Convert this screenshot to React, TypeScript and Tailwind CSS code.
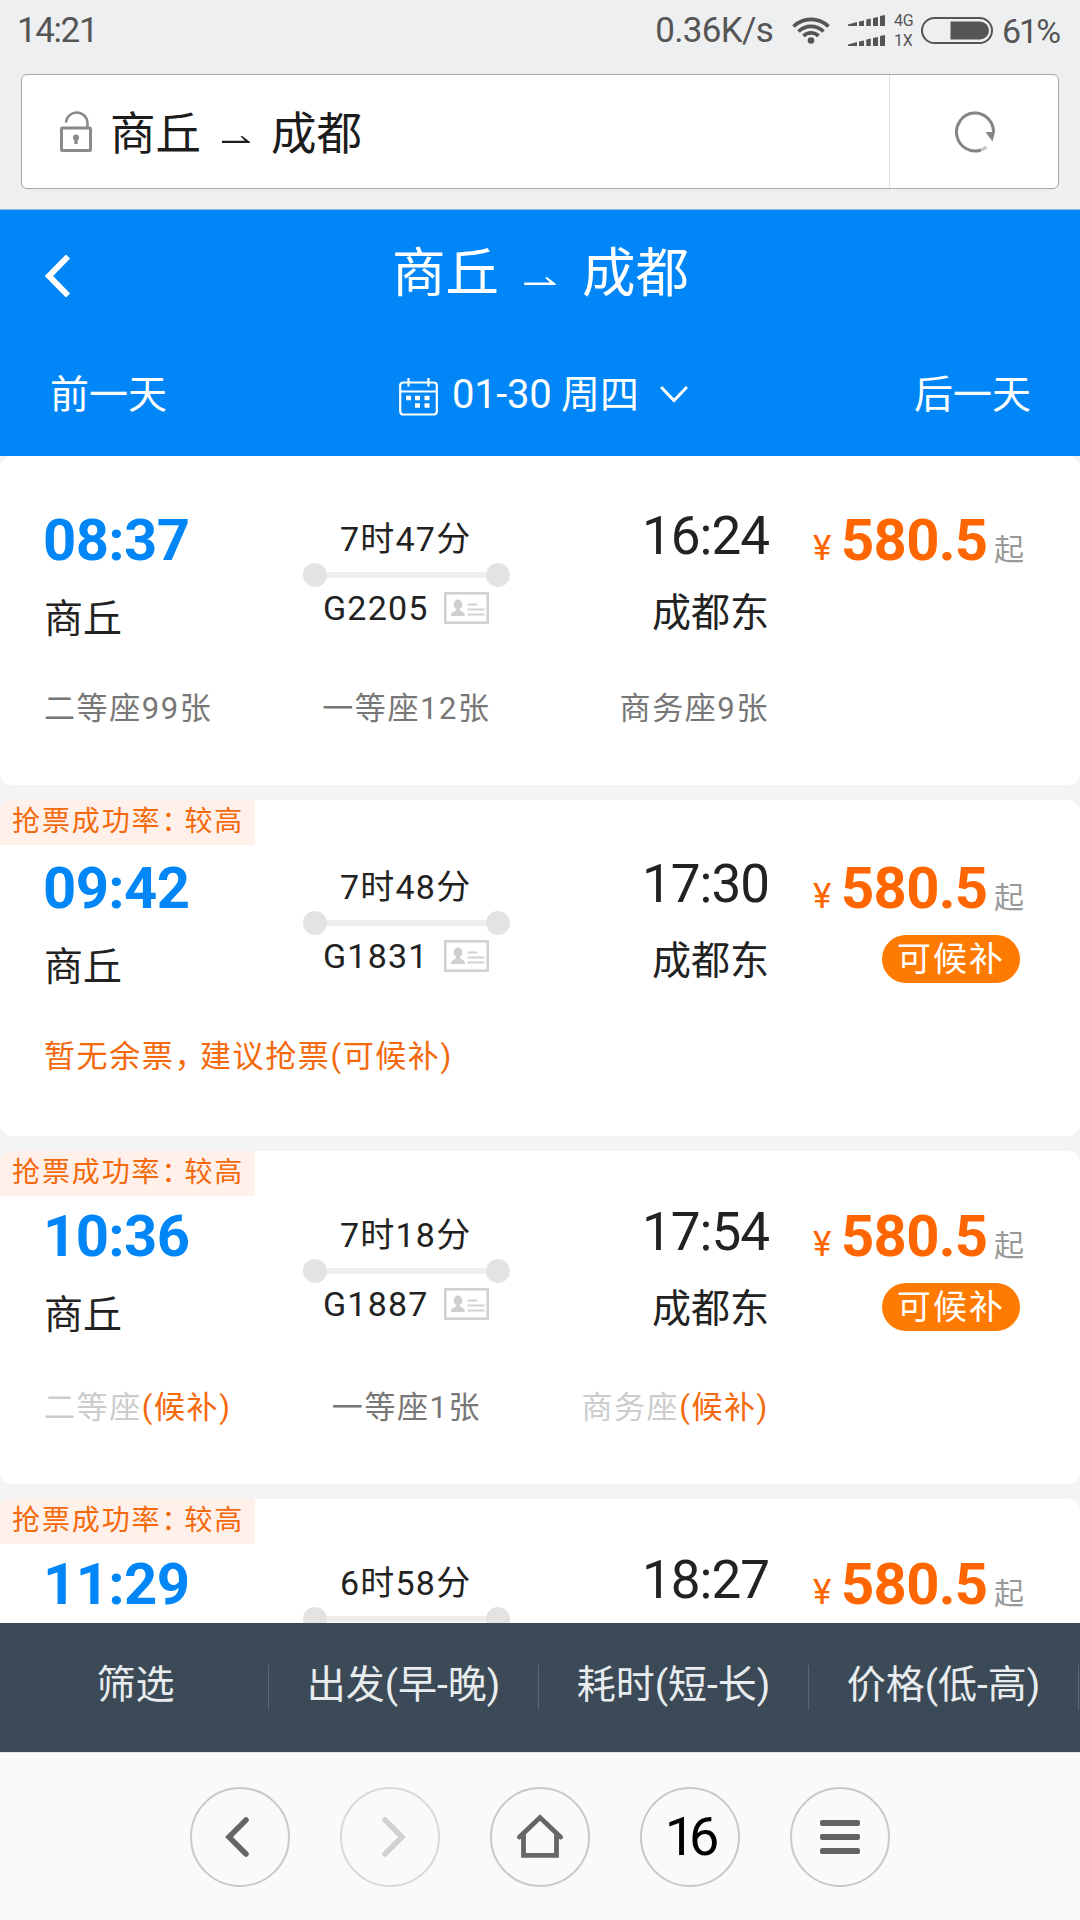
import React from "react";

type Seat = { label: string; waitlist?: boolean };

type Train = {
  depart: string;
  arrive: string;
  from?: string;
  to?: string;
  duration: string;
  code?: string;
  seats?: Seat[];
  notice?: boolean;
  tag?: boolean;
  pill?: boolean;
  frame: string;
  seatRow?: string;
};

const trains: Train[] = [
  {
    depart: "08:37",
    arrive: "16:24",
    from: "商丘",
    to: "成都东",
    duration: "7时47分",
    code: "G2205",
    seats: [{ label: "二等座99张" }, { label: "一等座12张" }, { label: "商务座9张" }],
    frame: "h-[329px] pt-[44px]",
    seatRow: "pt-[24px]",
  },
  {
    depart: "09:42",
    arrive: "17:30",
    from: "商丘",
    to: "成都东",
    duration: "7时48分",
    code: "G1831",
    notice: true,
    tag: true,
    pill: true,
    frame: "h-[336px] pt-[48px]",
    seatRow: "pt-[24px]",
  },
  {
    depart: "10:36",
    arrive: "17:54",
    from: "商丘",
    to: "成都东",
    duration: "7时18分",
    code: "G1887",
    seats: [
      { label: "二等座", waitlist: true },
      { label: "一等座1张" },
      { label: "商务座", waitlist: true },
    ],
    tag: true,
    pill: true,
    frame: "h-[333px] pt-[45px]",
    seatRow: "pt-[27px]",
  },
  {
    depart: "11:29",
    arrive: "18:27",
    duration: "6时58分",
    tag: true,
    frame: "h-[333px] pt-[45px]",
  },
];

function HalfArrow({ className }: { className: string }) {
  return (
    <svg viewBox="0 0 28 8" className={className} fill="currentColor">
      <path d="M0 4.800h23L18.500.6 20.200 0 28 6V7H0z" />
    </svg>
  );
}

function StatusBar() {
  return (
    <div className="flex h-[60px] items-center pt-[2px] pl-[17px] text-[#555555]">
      <span className="text-[35px] leading-[60px] tracking-[-1.4px]">14:21</span>
      <span className="ml-auto text-[35px] leading-[60px] tracking-[-0.7px]">0.36K/s</span>
      <svg viewBox="0 0 38 28" className="mb-[2px] ml-[19px] h-[28px] w-[38px]" fill="none" stroke="currentColor" strokeWidth="3.8">
        <path d="M1.5 10.5A25 25 0 0 1 36.500 10.500" />
        <path d="M6.500 15.500A18 18 0 0 1 31.500 15.500" />
        <path d="M11.500 20A10.800 10.800 0 0 1 26.500 20" />
        <circle cx="19" cy="24.500" r="3.300" fill="currentColor" stroke="none" />
      </svg>
      <div className="mb-[2px] ml-[18px] flex flex-col gap-[9px]">
        {[0, 1].map((i) => (
          <svg key={i} viewBox="0 0 37 11" className="h-[11px] w-[37px]" fill="currentColor">
            <path d="M0 9.500 9 7v4H0zM11 6.500l5-1V11h-5zM18.300 4.500l4.500-1V11h-4.500zM25 3l5-1v9h-5zM32 1l5-1v11h-5z" />
          </svg>
        ))}
      </div>
      <div className="ml-[9px] w-[23px] text-[16px] leading-[20px] tracking-[-0.3px]">
        <div>4G</div>
        <div>1X</div>
      </div>
      <svg viewBox="0 0 72 27" className="mb-[2px] ml-[4px] h-[27px] w-[72px]">
        <rect x="1" y="1" width="70" height="25" rx="12.500" fill="none" stroke="currentColor" strokeWidth="2" />
        <path d="M29.500 4.500H59a9 9 0 0 1 0 18H29.500z" fill="currentColor" />
      </svg>
      <span className="mr-[19px] ml-[9px] w-[59px] text-[34px] leading-[60px] tracking-[-2px] whitespace-nowrap">61%</span>
    </div>
  );
}

function AddressBar() {
  return (
    <div className="mx-[21px] mt-[14px] flex h-[115px] rounded-[6px] border border-[#a6a8a9] bg-white">
      <div className="flex flex-1 items-center pl-[38px] text-[#1c1c1c]">
        <svg viewBox="0 0 32 41" className="mb-[1px] h-[41px] w-[32px]" fill="none" stroke="#8a8a8a">
          <rect x="1.500" y="17" width="29" height="22.500" rx="1" strokeWidth="3" />
          <path d="M6 11.500a10.500 10.500 0 0 1 21.500 1.500v4" strokeWidth="2.600" />
          <circle cx="16" cy="26.500" r="3" fill="#8a8a8a" stroke="none" />
          <path d="M16 26v7" strokeWidth="3.400" />
        </svg>
        <span className="mt-[6px] ml-[18px] text-[45.500px] leading-[60px]">商丘</span>
        <HalfArrow className="mt-[16px] ml-[21px] h-[8px] w-[28px]" />
        <span className="mt-[6px] ml-[21px] text-[45.500px] leading-[60px]">成都</span>
      </div>
      <div className="flex w-[169px] items-center justify-center border-l border-[#dcdddd] pl-[2px]">
        <svg viewBox="0 0 42 42" className="h-[42px] w-[42px]" fill="none">
          <path d="M39.500 21.500A18.500 19 0 1 0 27 39" stroke="#858585" strokeWidth="3" />
          <path d="M27 39q3-1 5.500-3" stroke="#c8c8c8" strokeWidth="3" />
          <path d="M31.500 21h9.500l-2.500 9.500z" fill="#858585" />
        </svg>
      </div>
    </div>
  );
}

function Header() {
  return (
    <header className="h-[247px] border-t border-[#8fb6d6] bg-[#0086f6] text-white">
      <div className="flex h-[130px] items-center">
        <svg viewBox="0 0 26 44" className="mt-[1px] ml-[45px] h-[44px] w-[26px]" fill="none" stroke="currentColor" strokeWidth="6">
          <path d="M23 2.500 4 22l19 19.500" />
        </svg>
        <div className="mb-[3px] ml-[321px] flex items-center">
          <span className="text-[53.500px] leading-[60px]">商丘</span>
          <HalfArrow className="mt-[15px] ml-[25px] h-[9px] w-[32px]" />
          <span className="ml-[26px] text-[53.500px] leading-[60px]">成都</span>
        </div>
      </div>
      <div className="flex h-[110px] items-center text-[39px] whitespace-nowrap">
        <span className="ml-[50px] w-[349px] leading-[60px]">前一天</span>
        <svg viewBox="0 0 39 38" className="mt-[4px] h-[38px] w-[39px]" fill="none" stroke="currentColor" strokeWidth="2.200">
          <rect x="1.200" y="4.500" width="36.600" height="32" rx="3" />
          <path d="M1 13.500h37M9.500 0v8.500M29.500 0v8.500" />
          <path d="M7 20h5M16 20h5M25.500 20h5M16 27.500h5M25.500 27.500h5" strokeWidth="4.500" />
        </svg>
        <span className="ml-[14px] w-[98px] text-[40px] leading-[60px] tracking-[-0.300px]">01-30</span>
        <span className="ml-[11px] leading-[60px]">周四</span>
        <svg viewBox="0 0 28 18" className="mb-[3px] ml-[21px] h-[18px] w-[28px]" fill="none" stroke="currentColor" strokeWidth="3">
          <path d="m1 2 13 13.500L27 2" />
        </svg>
        <span className="mr-[49px] ml-auto leading-[60px]">后一天</span>
      </div>
    </header>
  );
}

function IdCard() {
  return (
    <svg viewBox="0 0 45 32" className="h-[32px] w-[45px]" fill="none" stroke="#d2d2d2">
      <rect x="1.300" y="1.300" width="42.400" height="29.400" strokeWidth="2.600" />
      <ellipse cx="14" cy="12.500" rx="4.300" ry="5" fill="#cfcfcf" stroke="none" />
      <path d="M7 24c0-4 3-4.500 5-5.500V16h4v2.500c2 1 5 1.500 5 5.500z" fill="#cfcfcf" stroke="none" />
      <path d="M23.500 12.500h10M23.500 17.500h17M23.500 22.500h17" strokeWidth="2" />
    </svg>
  );
}

function SeatLabel({ seat, className }: { seat: Seat; className: string }) {
  return (
    <span className={className}>
      <span className={seat.waitlist ? "text-[#cccccc]" : "text-[#777777]"}>{seat.label}</span>
      {seat.waitlist && <span className="text-[#f4690c]">(候补)</span>}
    </span>
  );
}

const seatPlace = ["w-[258px]", "flex w-[209px] justify-center", "flex w-[258px] justify-end"];

function TrainCard({ train }: { train: Train }) {
  return (
    <article className={`relative shrink-0 overflow-hidden rounded-[12px] bg-white text-[#222222] ${train.frame}`}>
      {train.tag && (
        <div className="absolute top-0 left-0 h-[45px] w-[255px] bg-[#fff0e9] pl-[12px] text-[28px] leading-[43px] tracking-[1.900px] whitespace-nowrap text-[#f4690c]">
          抢票成功率<span className="mr-[-7px]">：</span>较高
        </div>
      )}
      <div className="flex h-[160px] pl-[43px] whitespace-nowrap">
        <div className="w-[260px]">
          <div className="text-[58px] leading-[80px] font-bold tracking-[-0.600px] text-[#0086f6]">{train.depart}</div>
          <div className="pl-[1px] text-[39px] leading-[78px]">{train.from}</div>
        </div>
        <div className="w-[207px] pt-[15px]">
          <div className="pl-[37px] text-[34px] leading-[48px] tracking-[1.200px]">{train.duration}</div>
          <div className="flex items-center">
            <span className="h-[24px] w-[24px] rounded-full bg-[#e3e3e3]" />
            <span className="h-[6px] flex-1 bg-[#eeeeee]" />
            <span className="h-[24px] w-[24px] rounded-full bg-[#e3e3e3]" />
          </div>
          {train.code && (
            <div className="flex h-[42px] items-center pl-[20px]">
              <span className="w-[121px] text-[34px] leading-[42px] tracking-[1.200px]">{train.code}</span>
              <IdCard />
            </div>
          )}
        </div>
        <div className="w-[259px] text-right">
          <div className="text-[53px] leading-[73px] tracking-[-1px]">{train.arrive}</div>
          <div className="text-[39px] leading-[80px]">{train.to}</div>
        </div>
        <div className="flex w-[251px] flex-col items-end pl-[44px]">
          <div className="flex h-[80px] w-full items-baseline leading-[80px]">
            <span className="w-[28px] shrink-0 text-[35px] text-[#ff6600]">¥</span>
            <span className="w-[153px] shrink-0 text-[58px] font-bold tracking-[-0.700px] text-[#ff6600]">580.5</span>
            <span className="shrink-0 text-[30px] text-[#999999]">起</span>
          </div>
          {train.pill && (
            <div className="mt-[7px] h-[48px] w-[138px] rounded-full bg-[#ff7a00] pl-[15px] text-[34px] leading-[48px] tracking-[2px] text-white">
              可候补
            </div>
          )}
        </div>
      </div>
      <div className={`flex pl-[44px] text-[31px] leading-[50px] tracking-[1.600px] whitespace-nowrap ${train.seatRow ?? ""}`}>
        {train.notice && (
          <span className="text-[#f4690c]">
            暂无余票<span className="mr-[-7px]">，</span>建议抢票(可候补)
          </span>
        )}
        {train.seats?.map((seat, i) => (
          <SeatLabel key={seat.label} seat={seat} className={seatPlace[i]} />
        ))}
      </div>
    </article>
  );
}

const sorts = ["筛选", "出发(早-晚)", "耗时(短-长)", "价格(低-高)"];

function SortBar() {
  return (
    <div className="flex h-[129px] items-center bg-[#3b4a56] text-[39px] text-[#e8ecef]">
      {sorts.map((label) => (
        <div
          key={label}
          className="flex h-[45px] w-[270px] shrink-0 items-center justify-center border-r border-[#5b6872] pb-[5px] whitespace-nowrap first:w-[269px] first:pl-[3px]"
        >
          {label}
        </div>
      ))}
    </div>
  );
}

function RoundButton({ dim, children }: { dim?: boolean; children: React.ReactNode }) {
  return (
    <button
      className={`flex h-[100px] w-[100px] items-center justify-center rounded-full border-2 ${
        dim ? "border-[#d9d9d9] text-[#d2d2d2]" : "border-[#c9c9c9] text-[#666666]"
      }`}
    >
      {children}
    </button>
  );
}

function BrowserBar() {
  return (
    <nav className="flex h-[168px] justify-center gap-[50px] border-t border-[#e4e6e8] bg-[#fafafa] pt-[34px]">
      <RoundButton>
        <svg viewBox="0 0 24 40" className="mr-[7px] h-[40px] w-[24px]" fill="none" stroke="currentColor" strokeWidth="5.500" strokeLinecap="round">
          <path d="M21 3 4 20l17 17" />
        </svg>
      </RoundButton>
      <RoundButton dim>
        <svg viewBox="0 0 24 40" className="ml-[7px] h-[40px] w-[24px]" fill="none" stroke="currentColor" strokeWidth="5.500" strokeLinecap="round">
          <path d="m3 3 17 17L3 37" />
        </svg>
      </RoundButton>
      <RoundButton>
        <svg viewBox="0 0 46 44" className="mb-[2px] h-[44px] w-[46px]" fill="none" stroke="currentColor" strokeWidth="4.800" strokeLinecap="round">
          <path d="M2.500 23 23 3.500 43.500 23" />
          <path d="M6.500 21v20.300h33V21" />
        </svg>
      </RoundButton>
      <RoundButton>
        <span className="pr-[2px] font-[Roboto] text-[54px] leading-[96px] tracking-[-6px] text-black">16</span>
      </RoundButton>
      <RoundButton>
        <span className="flex flex-col gap-[8px]">
          <span className="h-[6px] w-[40px] rounded-[2px] bg-[#636363]" />
          <span className="h-[6px] w-[40px] rounded-[2px] bg-[#636363]" />
          <span className="h-[6px] w-[40px] rounded-[2px] bg-[#636363]" />
        </span>
      </RoundButton>
    </nav>
  );
}

export default function App() {
  return (
    <div className="flex h-[1920px] w-[1080px] flex-col overflow-hidden bg-[#edeff1] font-[Roboto,'Noto_Sans_CJK_SC',sans-serif]">
      <div className="h-[209px]">
        <StatusBar />
        <AddressBar />
      </div>
      <Header />
      <main className="flex h-[1167px] flex-col gap-[15px] overflow-hidden bg-[#f4f4f4]">
        {trains.map((train) => (
          <TrainCard key={train.depart} train={train} />
        ))}
      </main>
      <SortBar />
      <BrowserBar />
    </div>
  );
}
